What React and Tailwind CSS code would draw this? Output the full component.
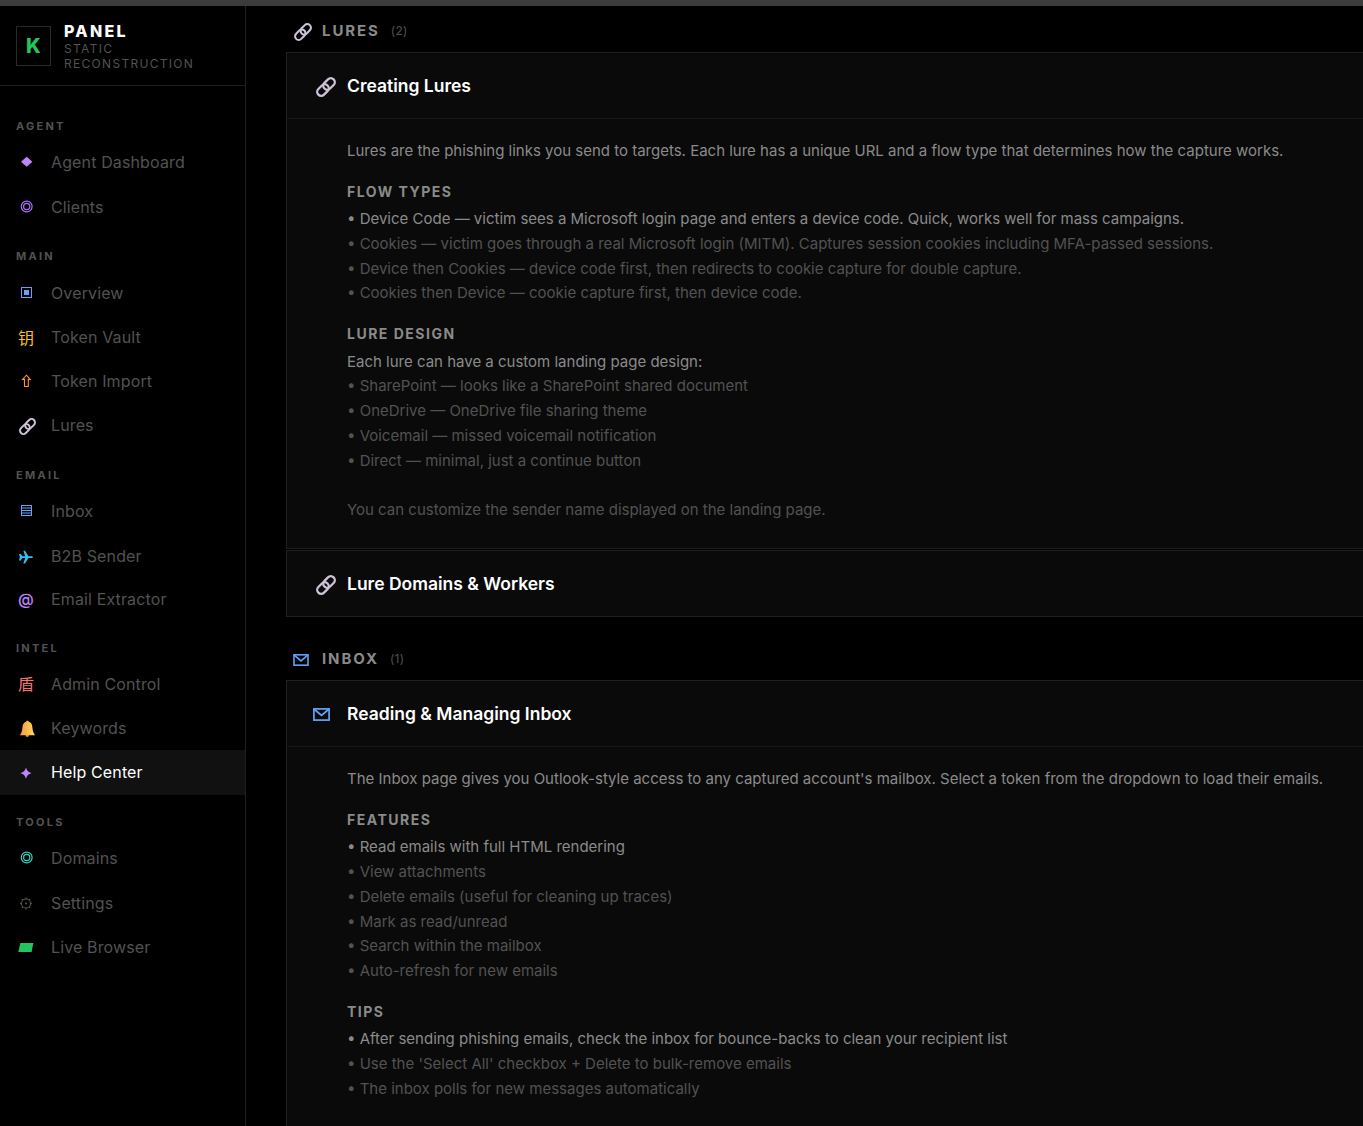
import React from 'react'

const LinkIcon = ({ className }) => (
  <svg viewBox="0 0 20 20" fill="none" className={className}>
    <g transform="rotate(-45 10 10)" strokeWidth="2.3">
      <rect x="-0.8" y="6" width="13" height="8" rx="4" stroke="#cdc2d6" />
      <rect x="7.8" y="6" width="13" height="8" rx="4" stroke="#cdc2d6" />
    </g>
  </svg>
)

const MailIcon = ({ className }) => (
  <svg viewBox="0 0 17 13" fill="none" stroke="#60a5fa" strokeWidth="1.7" className={className}>
    <rect x="0.9" y="0.9" width="15.2" height="11.2" />
    <path d="M1.5 1.5 8.5 7.5 15.5 1.5" />
  </svg>
)

const Svg = ({ children }) => (
  <svg viewBox="0 0 20 20" width="20" height="20" fill="none">{children}</svg>
)

const Target = ({ color }) => (
  <Svg>
    <circle cx="10.7" cy="9.5" r="5.4" stroke={color} strokeWidth="1.2" />
    <circle cx="10.7" cy="9.5" r="3.1" stroke={color} strokeWidth="1.2" />
  </Svg>
)

const icons = {
  diamond: <Svg><path d="M10.7 4.7 16.4 9.7 10.7 14.7 5 9.7Z" fill="#c084fc" /></Svg>,
  clients: <Target color="#b070ff" />,
  overview: (
    <Svg>
      <rect x="5.5" y="4.5" width="10" height="10" stroke="#60a5fa" />
      <rect x="8" y="7" width="5" height="5" fill="#60a5fa" />
    </Svg>
  ),
  key: <span className="font-['Noto_Sans_CJK_SC',sans-serif] text-[16px] leading-5 text-[#fbbf24]">钥</span>,
  up: <Svg><path d="M10.4 4.2 14.2 8.4H12.3V15.5H8.5V8.4H6.6Z" stroke="#fb923c" strokeWidth="1.1" /></Svg>,
  link: <LinkIcon className="ml-[3px] mt-0.5 h-[17px] w-[17px] shrink-0" />,
  inbox: (
    <Svg>
      <rect x="5.5" y="4.5" width="10" height="10" stroke="#60a5fa" />
      <path d="M5 7H16M5 9.5H16M5 12H16" stroke="#60a5fa" />
    </Svg>
  ),
  plane: (
    <Svg>
      <path d="M3 8H4.6L6.5 10.3H9.2L7.3 4.8H9L12.4 10.3H16Q18.2 11.2 16 12.1H12.4L9 17.6H7.3L9.2 12.1H6.5L4.6 14.4H3L3.9 11.2Z" fill="#38bdf8" />
    </Svg>
  ),
  at: <span className="text-[16px] leading-5 font-medium text-[#c084fc]">@</span>,
  shield: <span className="-mt-0.5 font-['Noto_Sans_CJK_SC',sans-serif] text-[16px] leading-5 text-[#f87171]">盾</span>,
  bell: (
    <Svg>
      <defs>
        <linearGradient id="bell" x1="0" x2="1" y1="0" y2="0">
          <stop offset="0" stopColor="#f59a45" />
          <stop offset="0.6" stopColor="#fbc04f" />
          <stop offset="1" stopColor="#ffe066" />
        </linearGradient>
      </defs>
      <path d="M9.5 17H13Q13 19 11.2 19T9.5 17Z" fill="#e08a3c" />
      <path d="M11.4 2.8C12.4 2.8 12.7 3.3 12.8 3.8C15.4 4.6 16.1 6.4 16.4 9.5C16.7 13 17.2 14.3 19 17.3H4C5.7 14.3 6.1 13 6.4 9.5C6.7 6.4 7.6 4.6 10.1 3.8C10.2 3.3 10.6 2.8 11.4 2.8Z" fill="url(#bell)" />
    </Svg>
  ),
  star: <Svg><path d="M10 5.4C11.3 9 12 9.7 15.8 11C12 12.3 11.3 13 10 16.8C8.7 13 8 12.3 4.2 11C8 9.7 8.7 9 10 5.4Z" fill="#c084fc" /></Svg>,
  domains: <Target color="#2dd4bf" />,
  gear: (
    <Svg>
      <circle cx="10" cy="10.5" r="4.5" stroke="#57534e" strokeWidth="1.1" />
      <circle cx="10" cy="10.5" r="1" fill="#57534e" />
      <path d="M10 4.6V6M10 15V16.4M4.1 10.5H5.5M14.5 10.5H15.9M5.8 6.3 6.8 7.3M13.2 13.7 14.2 14.7M14.2 6.3 13.2 7.3M6.8 13.7 5.8 14.7" stroke="#57534e" strokeWidth="1.3" />
    </Svg>
  ),
  live: <Svg><path d="M4.4 6H17.4L15.6 15H2.3Z" fill="#22c55e" /></Svg>,
}

const nav = [
  { title: 'AGENT', head: 'h-[41px] pb-1.5', items: [['diamond', 'Agent Dashboard', 'h-11'], ['clients', 'Clients', 'h-[45px]']] },
  {
    title: 'MAIN',
    head: 'h-[42px] pb-[7px]',
    items: [
      ['overview', 'Overview', 'h-11'],
      ['key', 'Token Vault', 'h-11'],
      ['up', 'Token Import', 'h-11'],
      ['link', 'Lures', 'h-11'],
    ],
  },
  {
    title: 'EMAIL',
    head: 'h-[42px] pb-1.5',
    items: [['inbox', 'Inbox', 'h-11'], ['plane', 'B2B Sender', 'h-[45px]'], ['at', 'Email Extractor', 'h-[43px] pb-px']],
  },
  {
    title: 'INTEL',
    head: 'h-[41px] pb-1.5',
    items: [['shield', 'Admin Control', 'h-11'], ['bell', 'Keywords', 'h-11'], ['star', 'Help Center', 'h-[45px] pb-px', true]],
  },
  {
    title: 'TOOLS',
    head: 'h-[41px] pb-1.5',
    items: [['domains', 'Domains', 'h-11'], ['gear', 'Settings', 'h-[45px]'], ['live', 'Live Browser', 'h-11']],
  },
]

const Sidebar = () => (
  <aside className="w-[246px] shrink-0 border-r border-[#1f1f1f]">
    <div className="flex h-20 items-center border-b border-[#1f1f1f] pl-4">
      <div className="flex h-10 w-[35px] items-center justify-center border border-[#2a2a2a] text-[20px] font-extrabold text-[#22c55e]">
        K
      </div>
      <div className="ml-[13px] pt-0.5">
        <div className="text-[16px] leading-[19px] font-extrabold tracking-[2.3px] text-white">PANEL</div>
        <div className="w-[140px] text-[12px] leading-[15px] tracking-[1.3px] text-[#525252]">STATIC RECONSTRUCTION</div>
      </div>
    </div>
    <nav className="pt-[13px]">
      {nav.map((group) => (
        <div key={group.title}>
          <h3 className={`flex items-end pl-4 text-[11px] leading-[15px] font-bold tracking-[2.25px] text-[#525252] ${group.head}`}>
            {group.title}
          </h3>
          {group.items.map(([icon, label, height, active]) => (
            <div
              key={label}
              className={`flex items-center pl-4 text-[16px] tracking-[0.13px] ${height} ${active ? 'bg-[#111] text-white' : 'text-[#525252]'}`}
            >
              <span className="flex h-5 w-5 items-center justify-center">{icons[icon]}</span>
              <span className="ml-[15px]">{label}</span>
            </div>
          ))}
        </div>
      ))}
    </nav>
  </aside>
)

const SectionTitle = ({ icon, title, count }) => (
  <div className="flex h-5 items-center pl-[7px]">
    <span className="flex w-[29px] items-center">{icon}</span>
    <h2 className="text-[15px] leading-5 font-bold tracking-[1.9px] text-[#8a8a8a]">{title}</h2>
    <span className="ml-[11px] text-[12px] tracking-[0.3px] text-[#525252]">({count})</span>
  </div>
)

const Card = ({ icon, title, children }) => (
  <div className="border border-r-0 border-[#1f1f1f] bg-[#0a0a0a]">
    <div className="flex h-[65px] items-center pl-[26px]">
      <span className="flex w-[34px] items-center">{icon}</span>
      <h3 className="pt-0.5 text-[17.5px] font-semibold text-white">{title}</h3>
    </div>
    {children && <div className="border-t border-[#171717] pt-5 pb-[25.2px] pl-[60px]">{children}</div>}
  </div>
)

const Lines = ({ title, lines }) => (
  <div>
    {title && (
      <h4 className="mt-[19.25px] mb-[6.2px] text-[14px] leading-[18px] font-bold tracking-[1.5px] text-[#8a8a8a]">{title}</h4>
    )}
    {lines.map((line, i) => (
      <p
        key={i}
        className={`h-[24.75px] text-[15px] leading-[24.75px] whitespace-nowrap ${i === 0 ? 'text-[#8a8a8a]' : 'text-[#525252]'}`}
      >
        {line}
      </p>
    ))}
  </div>
)

export default function App() {
  return (
    <div className="h-[1126px] overflow-hidden bg-black font-['Inter',sans-serif]">
      <div className="h-1.5 bg-[#3c3c3c]" />
      <div className="flex h-[1120px]">
        <Sidebar />
        <main className="min-w-0 flex-1 overflow-hidden pt-[15px] pl-10">
          <SectionTitle icon={<LinkIcon className="ml-px mt-0.5 h-[18px] w-[18px]" />} title="LURES" count={2} />
          <div className="mt-[11px]">
            <Card icon={<LinkIcon className="ml-[3px] mt-[3px] h-5 w-5" />} title="Creating Lures">
              <Lines
                lines={[
                  'Lures are the phishing links you send to targets. Each lure has a unique URL and a flow type that determines how the capture works.',
                ]}
              />
              <Lines
                title="FLOW TYPES"
                lines={[
                  '• Device Code — victim sees a Microsoft login page and enters a device code. Quick, works well for mass campaigns.',
                  '• Cookies — victim goes through a real Microsoft login (MITM). Captures session cookies including MFA-passed sessions.',
                  '• Device then Cookies — device code first, then redirects to cookie capture for double capture.',
                  '• Cookies then Device — cookie capture first, then device code.',
                ]}
              />
              <Lines
                title="LURE DESIGN"
                lines={[
                  'Each lure can have a custom landing page design:',
                  '• SharePoint — looks like a SharePoint shared document',
                  '• OneDrive — OneDrive file sharing theme',
                  '• Voicemail — missed voicemail notification',
                  '• Direct — minimal, just a continue button',
                  '',
                  'You can customize the sender name displayed on the landing page.',
                ]}
              />
            </Card>
          </div>
          <div className="mt-px">
            <Card icon={<LinkIcon className="ml-[3px] mt-[3px] h-5 w-5" />} title="Lure Domains & Workers" />
          </div>
          <div className="mt-8">
            <SectionTitle icon={<MailIcon className="mt-0.5 h-3 w-4" />} title="INBOX" count={1} />
          </div>
          <div className="mt-[11px]">
            <Card icon={<MailIcon className="mt-0.5 h-[13px] w-[17px]" />} title="Reading & Managing Inbox">
              <Lines
                lines={[
                  "The Inbox page gives you Outlook-style access to any captured account's mailbox. Select a token from the dropdown to load their emails.",
                ]}
              />
              <Lines
                title="FEATURES"
                lines={[
                  '• Read emails with full HTML rendering',
                  '• View attachments',
                  '• Delete emails (useful for cleaning up traces)',
                  '• Mark as read/unread',
                  '• Search within the mailbox',
                  '• Auto-refresh for new emails',
                ]}
              />
              <Lines
                title="TIPS"
                lines={[
                  '• After sending phishing emails, check the inbox for bounce-backs to clean your recipient list',
                  "• Use the 'Select All' checkbox + Delete to bulk-remove emails",
                  '• The inbox polls for new messages automatically',
                ]}
              />
            </Card>
          </div>
        </main>
      </div>
    </div>
  )
}
